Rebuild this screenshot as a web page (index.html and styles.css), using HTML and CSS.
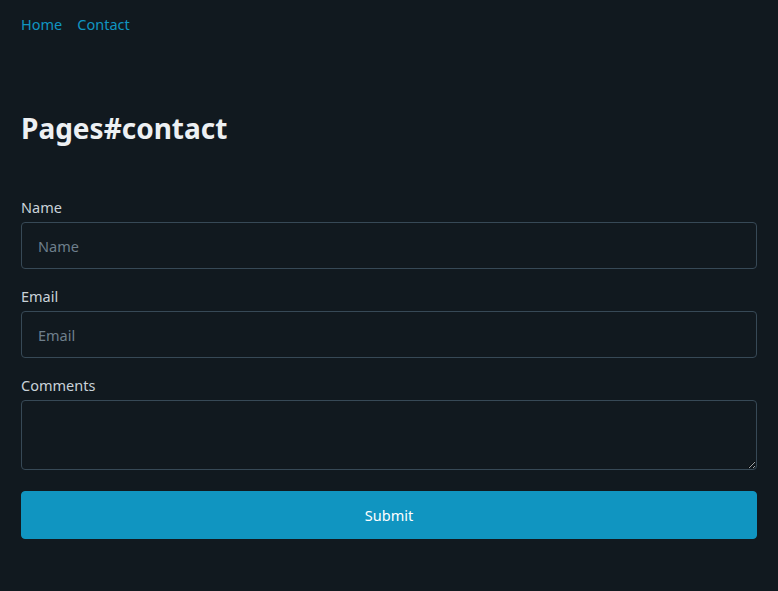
FILE: index.html
```html
<!DOCTYPE html>
<html lang="en">
<head>
<meta charset="utf-8">
<title>Contact</title>
<link rel="stylesheet" href="styles.css">
</head>
<body>
<nav class="nav">
  <ul class="nav-list">
    <li><a href="#" class="nav-link">Home</a></li>
    <li><a href="#" class="nav-link">Contact</a></li>
  </ul>
</nav>
<main class="main">
  <h1 class="title">Pages#contact</h1>
  <form class="form">
    <label class="label" for="name">Name</label>
    <input class="field" id="name" type="text" placeholder="Name">
    <label class="label" for="email">Email</label>
    <input class="field" id="email" type="email" placeholder="Email">
    <label class="label" for="comments">Comments</label>
    <textarea class="field area" id="comments"></textarea>
    <button class="submit" type="submit">Submit</button>
  </form>
</main>
</body>
</html>
```
FILE: styles.css
```css
html, body {
  margin: 0;
  background: #11191f;
}
body {
  padding: 0 21px;
  font-family: "Noto Sans", "Open Sans", sans-serif;
  font-size: 14.5px;
  line-height: 22.5px;
  color: #bbc6ce;
  min-height: 591px;
  box-sizing: border-box;
}
.nav {
  padding-top: 13px;
}
.nav-list {
  list-style: none;
  margin: 0;
  padding: 0;
  display: flex;
  gap: 15px;
}
.nav-link {
  color: #1095c1;
  text-decoration: none;
}
.title {
  margin: 75px 0 51px;
  font-size: 28px;
  line-height: 34px;
  font-weight: 700;
  color: #edf0f3;
}
.form {
  display: flex;
  flex-direction: column;
}
.label {
  display: block;
  margin-bottom: 4px;
  color: #c9d2d9;
}
.field {
  box-sizing: border-box;
  width: 100%;
  height: 47px;
  margin: 0 0 15.5px;
  padding: 11px 16px;
  background: #11191f;
  border: 1px solid #374956;
  border-radius: 4px;
  color: #bbc6ce;
  font-family: inherit;
  font-size: 14.5px;
  line-height: 22.5px;
  outline: none;
}
.field::placeholder {
  color: #6e7f8c;
}
.area {
  height: 69.5px;
  margin-bottom: 21.5px;
  resize: vertical;
}
.submit {
  box-sizing: border-box;
  width: 100%;
  height: 48px;
  background: #1095c1;
  border: 1px solid #1095c1;
  border-radius: 4px;
  color: #fff;
  font-family: inherit;
  font-size: 14.5px;
  line-height: 22.5px;
  cursor: pointer;
}
```
